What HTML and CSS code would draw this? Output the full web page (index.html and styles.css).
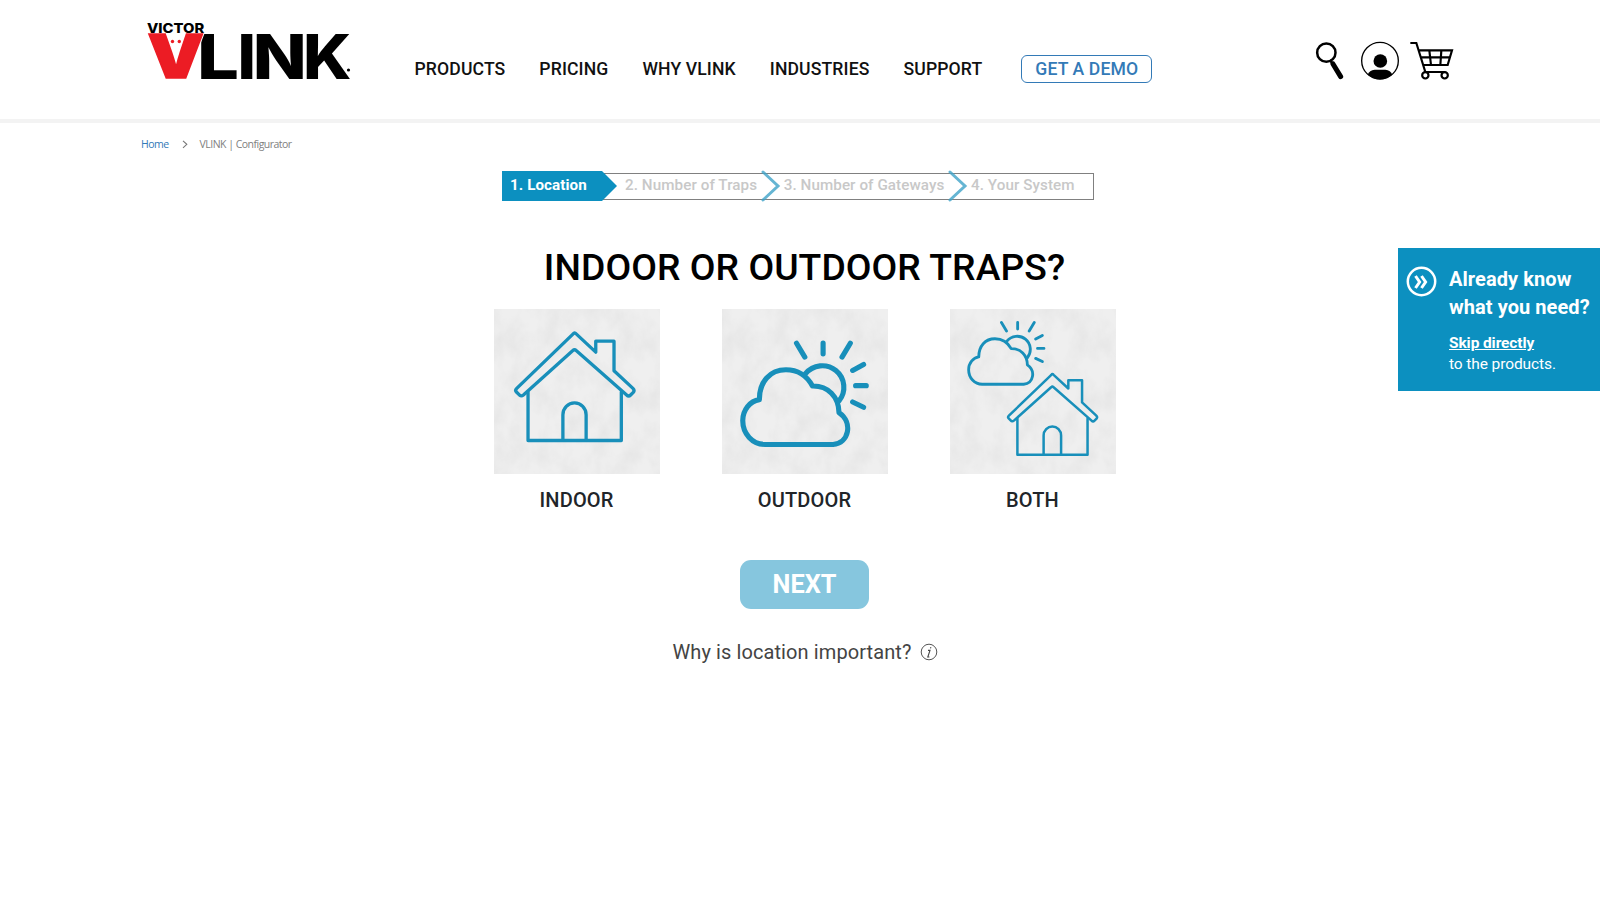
FILE: index.html
```html
<!DOCTYPE html>
<html lang="en">
<head>
<meta charset="utf-8">
<title>VLINK | Configurator</title>
<link rel="stylesheet" href="styles.css">
</head>
<body>
<svg class="defs" width="0" height="0" aria-hidden="true">
  <defs>
    <filter id="concrete" x="0" y="0" width="100%" height="100%">
      <feTurbulence type="fractalNoise" baseFrequency="0.018 0.012" numOctaves="6" seed="11"/>
      <feColorMatrix values="0 0 0 0 0.5  0 0 0 0 0.5  0 0 0 0 0.5  0.32 0 0 0 -0.11"/>
    </filter>
    <g id="house">
      <path d="M265 101Q269 95 274 101L333 156V123H388V212L445 265Q451 271 446 277L438 285Q432 291 426 285L274 151Q269 146 264 151L115 285Q108 291 102 284L94 276Q89 271 95 265Z"/>
      <path d="M129 276V422H410V276M234 422V345a35 36 0 0 1 70 0V422"/>
    </g>
    <g id="cloud">
      <path d="M150 434H355C403 430 416 368 373 338C372 290 340 257 293 258C275 225 245 209 213 209C165 209 133 245 133 299C105 303 83 330 83 362C83 402 112 434 150 434Z"/>
      <path d="M272 221A64 64 0 0 1 373 303"/>
      <path d="M245 129L270 171M325 129V161M407 129L382 171M447 193L414 211M423 257H455M414 306L447 322"/>
    </g>
  </defs>
</svg>
<header class="header">
  <a class="logo" href="#">
    <svg width="212" height="90" viewBox="144 10 212 90">
      <text class="logo-small" x="147" y="32.6" textLength="57.2" lengthAdjust="spacingAndGlyphs">VICTOR</text>
      <text class="logo-big" x="197" y="79" textLength="42" lengthAdjust="spacingAndGlyphs">L</text>
      <text class="logo-big" x="237.5" y="79" textLength="18.5" lengthAdjust="spacingAndGlyphs">I</text>
      <text class="logo-big" x="252.7" y="79" textLength="54" lengthAdjust="spacingAndGlyphs">N</text>
      <text class="logo-big" x="303" y="79" textLength="48.5" lengthAdjust="spacingAndGlyphs">K</text>
      <text class="logo-big logo-red" x="147.6" y="78.2" textLength="56.4" lengthAdjust="spacingAndGlyphs">V</text>
      <circle class="logo-eye" cx="172.5" cy="41.5" r="1.7"/><circle class="logo-eye" cx="179.3" cy="41.5" r="1.7"/>
      <circle cx="348.5" cy="70" r="1.6"/>
    </svg>
  </a>
  <nav class="nav">
    <a href="#">PRODUCTS</a><a href="#">PRICING</a><a href="#">WHY VLINK</a><a href="#">INDUSTRIES</a><a href="#">SUPPORT</a><a class="demo" href="#">GET A DEMO</a>
  </nav>
  <div class="tools">
    <svg width="30" height="42" viewBox="45 33 90 126"><circle cx="79" cy="68" r="27.5" fill="none" stroke="#000" stroke-width="7.5"/><path d="M90 90L98 101" stroke="#000" stroke-width="8"/><path d="M99 102L122 140" stroke="#000" stroke-width="15" stroke-linecap="round"/></svg>
    <svg width="40" height="42" viewBox="180 33 120 126"><circle cx="240" cy="92" r="55" fill="none" stroke="#000" stroke-width="4"/><circle cx="241" cy="93" r="20.5"/><path d="M203 134Q208 120 224 119H256Q272 120 277 134Q240 162 203 134Z"/></svg>
    <svg width="45" height="42" viewBox="327 33 135 126" fill="none" stroke="#000" stroke-width="6.5"><path d="M331 39H349L376 126H436M356 61H456L443 105H370M362 82H450M388 61L393 105M424 61L421 105"/><circle cx="376" cy="136" r="9.5"/><circle cx="434" cy="136" r="9.5"/></svg>
  </div>
</header>
<div class="crumbs"><a href="#">Home</a><svg width="6" height="9" viewBox="0 0 6 9"><path d="M1 .8L4.8 4.3L1 7.8" fill="none" stroke="#777" stroke-width="1.1"/></svg><span>VLINK | Configurator</span></div>
<main class="main">
  <div class="steps">
    <div class="step step-on">1. Location</div>
    <div class="step">2. Number of Traps</div>
    <svg class="chev" width="20" height="32" viewBox="0 0 20 32"><path d="M2 2L17 16L2 30"/></svg>
    <div class="step">3. Number of Gateways</div>
    <svg class="chev" width="20" height="32" viewBox="0 0 20 32"><path d="M2 2L17 16L2 30"/></svg>
    <div class="step">4. Your System</div>
  </div>
  <h1 class="title">INDOOR OR OUTDOOR TRAPS?</h1>
  <div class="cards">
    <div class="card">
      <svg class="pic" viewBox="27 27 497 497"><rect class="grain" x="20" y="20" width="515" height="515"/><use href="#house" stroke-width="10" transform="translate(-1 1)"/></svg>
      <span>INDOOR</span>
    </div>
    <div class="card">
      <svg class="pic" viewBox="21 27 497 497"><rect class="grain" x="15" y="20" width="515" height="515"/><use href="#cloud" stroke-width="15.5" transform="translate(-1 1)"/></svg>
      <span>OUTDOOR</span>
    </div>
    <div class="card">
      <svg class="pic" viewBox="30 27 497 497"><rect class="grain" x="25" y="20" width="515" height="515"/><use href="#cloud" stroke-width="14" transform="translate(34 -11) scale(.61)"/><use href="#house" stroke-width="10" transform="translate(134.5 149.5) scale(.752 .75)"/></svg>
      <span>BOTH</span>
    </div>
  </div>
  <button class="next">NEXT</button>
  <div class="why"><span>Why is location important?</span><svg width="18" height="18" viewBox="0 0 18 18"><circle cx="9" cy="9" r="7.8" fill="none" stroke="#555" stroke-width="1"/><path d="M8 7.4H10L7.8 14H9.4M10.9 4.2L10.5 5.4" fill="none" stroke="#444" stroke-width="1.1"/></svg></div>
</main>
<aside class="skip">
  <svg width="31" height="31" viewBox="0 0 31 31" fill="none" stroke="#fff"><circle cx="15.5" cy="15.5" r="13.7" stroke-width="2.5"/><path d="M9.5 10L13.6 16L9.5 22M15.5 10L19.6 16L15.5 22" stroke-width="3"/></svg>
  <div class="skip-text">
    <div class="skip-head">Already know<br>what you need?</div>
    <div class="skip-body"><a href="#">Skip directly</a><br>to the products.</div>
  </div>
</aside>
</body>
</html>
```
FILE: styles.css
```css
* { box-sizing: border-box; }
body { margin: 0; background: #fff; font-family: Roboto, sans-serif; color: #212529; position: relative; height: 900px; overflow: hidden; }
a { color: inherit; text-decoration: none; }
.defs { display: block; }
.header { height: 123px; border-bottom: 4px solid #f3f3f3; display: flex; align-items: flex-start; padding: 10px 146px 0 144px; }
.logo { display: block; width: 270.5px; height: 90px; }
.logo svg { display: block; overflow: visible; }
.logo-small { font: 800 13.4px Inter, sans-serif; }
.logo-big { font: 800 61.8px Inter, sans-serif; }
.logo-red, .logo-eye { fill: #ec1c24; }
.logo-red { font-weight: 900; font-size: 59.8px; stroke: #ec1c24; stroke-width: 1.6px; filter: drop-shadow(1.2px 0 0 #fff); }
.nav { display: flex; align-items: center; gap: 34px; margin-top: 45px; height: 28px; font-size: 17.6px; font-weight: 500; letter-spacing: .12px; color: #111; white-space: nowrap; }
.demo { height: 28px; width: 131px; border: 1.5px solid #337ab7; border-radius: 6px; color: #337ab7; display: flex; align-items: center; justify-content: center; margin-left: 5px; }
.tools { display: flex; gap: 10px; margin: 31px 0 0 auto; }
.tools svg + svg { margin-left: 5px; }
.tools svg + svg + svg { margin-left: -1px; }
.crumbs { display: flex; align-items: center; padding-left: 141px; height: 42px; font: 10.5px "Open Sans", sans-serif; letter-spacing: -.52px; color: #808080; }
.crumbs a { color: #337ab7; }
.crumbs svg { margin: 0 12px 0 13px; }
.main { display: flex; flex-direction: column; align-items: center; padding-left: 9px; }
.steps { width: 592px; height: 27px; margin: 8px 13px 0 0; border: 1px solid #808080; display: flex; align-items: center; font-size: 15.2px; font-weight: 500; letter-spacing: .08px; color: #c8c8c8; white-space: nowrap; }
.step { padding-bottom: 3px; }
.step-on { height: 30px; width: 115px; margin: -1px 8px 0 -1px; padding: 0 0 2px 8px; background: #0c90c0; color: #fff; font-weight: 700; display: flex; align-items: center; clip-path: polygon(0 0, 100px 0, 100% 50%, 100px 100%, 0 100%); flex: none; }
.chev { margin: -1px 3px 0 3.6px; flex: none; fill: none; stroke: #3fa3c9; stroke-width: 3; stroke-linecap: round; opacity: .8; }
.title { margin: 43px 0 0; font-size: 37.3px; line-height: 49px; font-weight: 500; letter-spacing: .06px; color: #000; }
.cards { display: flex; gap: 62px; margin-top: 17px; }
.card { width: 166px; display: flex; flex-direction: column; align-items: center; gap: 13px; font-size: 20px; line-height: 26px; font-weight: 500; letter-spacing: .15px; }
.pic { width: 166px; height: 165px; background: #efefef; fill: none; stroke: #188fba; stroke-linejoin: round; stroke-linecap: round; }
.grain { filter: url(#concrete); stroke: none; }
.next { width: 129px; height: 49px; margin-top: 47px; padding: 0; border: 0; border-radius: 11px; background: #86c6de; color: #fff; font: 700 25.3px Roboto, sans-serif; }
.why { display: flex; align-items: center; gap: 8px; margin: 30px 0 0 1px; font-size: 20px; line-height: 26px; letter-spacing: .1px; color: #444; }
.skip { position: absolute; top: 248px; right: 0; width: 202px; height: 143px; background: #0c90c0; color: #fff; display: flex; padding: 17px 0 0 8px; gap: 12px; }
.skip svg { flex: none; margin-top: .5px; }
.skip-head { font-size: 20px; line-height: 28px; font-weight: 700; letter-spacing: .07px; white-space: nowrap; }
.skip-body { font-size: 15.5px; letter-spacing: -.1px; line-height: 21px; margin-top: 12px; }
.skip-body a { font-weight: 700; text-decoration: underline; }
```
